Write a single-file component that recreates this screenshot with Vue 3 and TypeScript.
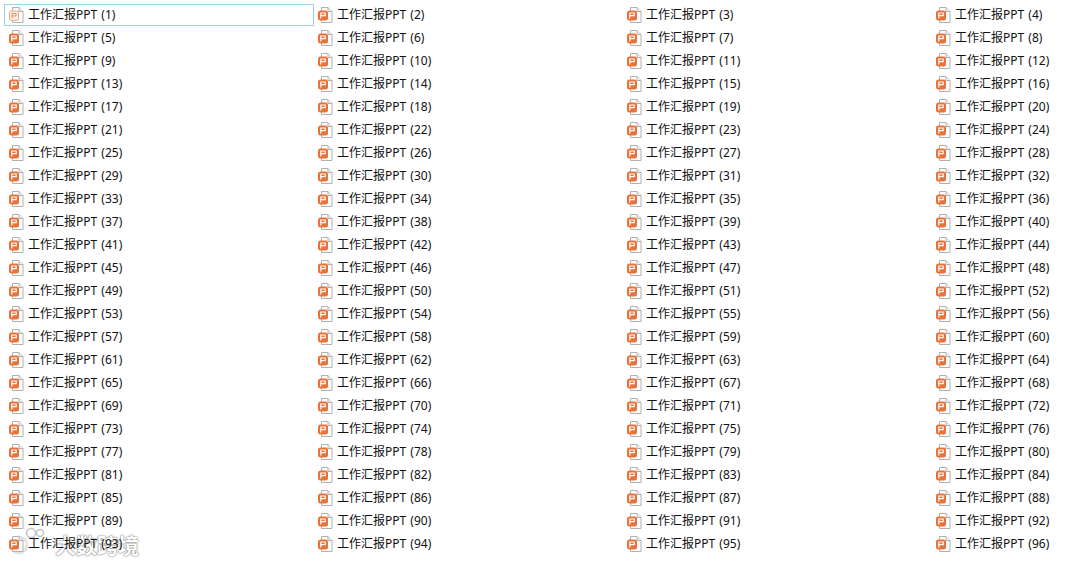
<script setup lang="ts">
const items: number[] = Array.from({ length: 96 }, (_, i) => i + 1)
</script>

<template>
  <div class="page">
    <div class="watermark">
      <svg class="wm-logo" width="36" height="30" viewBox="0 0 36 30">
        <circle cx="11" cy="18" r="8" fill="none" stroke="#e4e4e4" stroke-width="3" />
        <circle cx="23" cy="6" r="4.5" fill="#fff" stroke="#c4c4c4" stroke-width="1.5" />
        <circle cx="32" cy="6" r="3.5" fill="#fff" stroke="#c4c4c4" stroke-width="1.5" />
      </svg>
      <span class="wm-text">大数跨境</span>
    </div>
    <div class="grid">
      <div v-for="n in items" :key="n" class="item" :class="{ selected: n === 1 }">
        <svg class="icon" width="16" height="16" viewBox="0 0 16 16">
          <path d="M4.5 .5H11L15 4.5V15.5H4.5Z" fill="#fff" stroke="#b0b0b0" />
          <path d="M11 .5V4.5H15" fill="#efefef" stroke="#b0b0b0" />
          <template v-if="n === 1">
            <rect x="1.5" y="4" width="9" height="9.5" rx="2" fill="#fbeee6" stroke="#eda67f" />
            <path d="M4 11.5V6.5H8V9H4" fill="none" stroke="#e9915f" />
          </template>
          <template v-else>
            <rect x="1" y="3.5" width="10" height="10" rx="2.5" fill="#e9723a" />
            <path d="M3.8 11.5V6H8.2V8.7H3.8" fill="none" stroke="#fff" stroke-width="1.2" />
          </template>
        </svg>
        <span class="label">工作汇报PPT ({{ n }})</span>
      </div>
    </div>
  </div>
</template>

<style scoped>
.page {
  position: relative;
  width: 1067px;
  height: 562px;
  overflow: hidden;
  background: #fff;
  font-family: "Noto Sans", "Noto Sans CJK SC", sans-serif;
}
.grid {
  position: relative;
  display: grid;
  grid-template-columns: repeat(4, 309px);
  grid-auto-rows: 23px;
  padding: 4px 0 0 4px;
}
.item {
  display: flex;
  align-items: center;
  height: 22px;
  padding-left: 4px;
  box-sizing: border-box;
  font-size: 12px;
  color: #111;
}
.item.selected {
  width: 310px;
  border: 1px solid #99d1ea;
  padding-left: 3px;
}
.icon {
  flex: none;
  margin-right: 4px;
}
.label {
  white-space: nowrap;
  word-spacing: 1px;
  position: relative;
  top: -1px;
}
.watermark {
  position: absolute;
  left: 8px;
  bottom: 5px;
  display: flex;
  align-items: flex-end;
  gap: 11px;
}
.wm-text {
  font-family: "Noto Sans CJK SC", sans-serif;
  font-size: 21px;
  line-height: 26px;
  font-weight: 700;
  color: #fff;
  text-shadow: 0 0 2px #777, 0 0 1px #777;
}
</style>
